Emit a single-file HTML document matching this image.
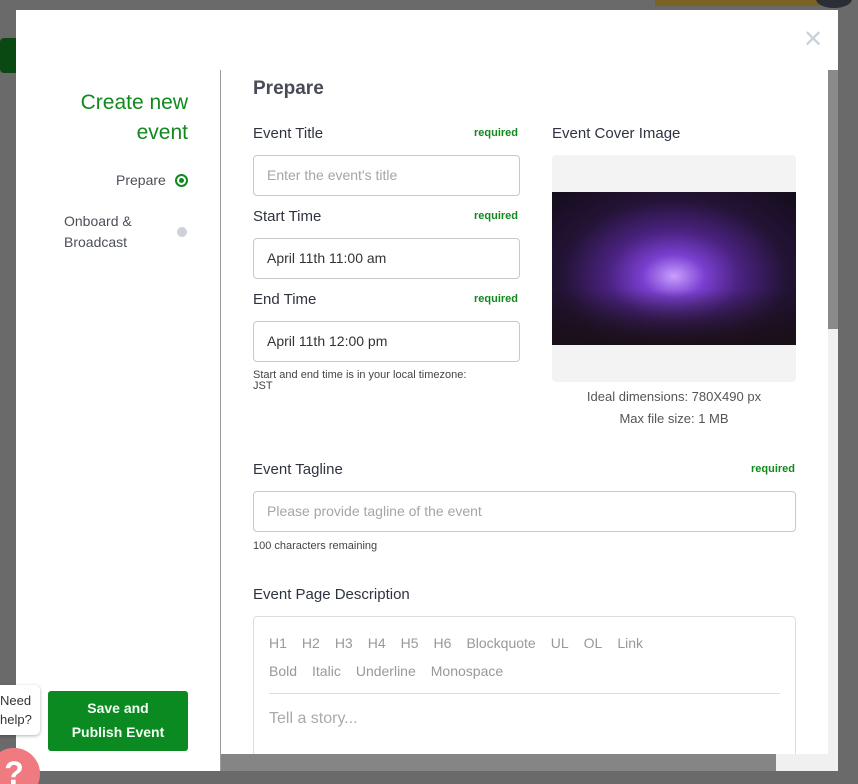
<!DOCTYPE html>
<html><head><style>
*{box-sizing:border-box;margin:0;padding:0}
html,body{width:858px;height:784px;overflow:hidden}
body{background:#6a6a6a;font-family:"Liberation Sans",sans-serif;position:relative}
.a{position:absolute}
.lbl{font-size:15px;color:#2f3340;position:absolute;top:0}
.req{font-size:11px;font-weight:bold;color:#12891f;position:absolute}
.inp{position:absolute;border:1px solid #c9c9c9;border-radius:4px;height:41px;background:#fff;font-size:14px;padding:11px 13px;color:#333}
.ph{color:#a5a5a5}
.tb{color:#999;font-size:14px}
.tb span{margin-right:15px}
</style></head><body>
<div class="a" style="left:655px;top:0;width:170px;height:6px;background:#7a6224"></div>
<div class="a" style="left:816px;top:-10px;width:36px;height:18px;border-radius:50%;background:#2b2e35"></div>
<div class="a" style="left:0;top:38px;width:16px;height:35px;background:#0a4a12;border-radius:4px 0 0 4px"></div>
<div class="a" style="left:16px;top:10px;width:822px;height:761px;background:#fff"></div>
<div class="a" style="left:803px;top:29px;font-size:24px;color:#c8d0d8;line-height:22px">✕</div>
<div class="a" style="left:220px;top:70px;width:1px;height:701px;background:#9a9a9a"></div>
<div class="a" style="left:40px;top:88px;width:148px;text-align:right;color:#12891f;font-size:21px;line-height:30px">Create new event</div>
<div class="a" style="left:116px;top:172px;font-size:14px;color:#4b4f58">Prepare</div>
<div class="a" style="left:175px;top:174px;width:13px;height:13px;border:2px solid #12891f;border-radius:50%"><div style="width:5px;height:5px;margin:2px;background:#12891f;border-radius:50%"></div></div>
<div class="a" style="left:64px;top:211px;font-size:14px;color:#4b4f58;line-height:21px">Onboard &amp;<br>Broadcast</div>
<div class="a" style="left:177px;top:227px;width:10px;height:10px;background:#ced2d8;border-radius:50%"></div>
<div class="a" style="left:48px;top:691px;width:140px;height:60px;background:#0c8a22;border-radius:3px;color:#f2fff2;font-weight:bold;font-size:14px;text-align:center;line-height:24px;padding-top:5px">Save and<br>Publish Event</div>
<div class="a" style="left:-10px;top:685px;width:50px;height:50px;background:#fff;border-radius:5px;font-size:13px;color:#333;line-height:19px;padding:6px 0 0 10px;box-shadow:0 1px 3px rgba(0,0,0,.3)">Need<br>help?</div>
<div class="a" style="left:-12px;top:748px;width:52px;height:52px;border-radius:50%;background:#ef7b80;color:#fff;font-size:32px;font-weight:bold;text-align:center;line-height:50px">?</div>

<div class="a" style="left:253px;top:78px;font-size:19px;font-weight:bold;color:#474b55">Prepare</div>
<div class="lbl" style="left:253px;top:125px">Event Title</div>
<div class="req" style="left:474px;top:127px">required</div>
<div class="inp" style="left:253px;top:155px;width:267px"><span class="ph">Enter the event's title</span></div>
<div class="lbl" style="left:253px;top:208px">Start Time</div>
<div class="req" style="left:474px;top:210px">required</div>
<div class="inp" style="left:253px;top:238px;width:267px">April 11th 11:00 am</div>
<div class="lbl" style="left:253px;top:291px">End Time</div>
<div class="req" style="left:474px;top:293px">required</div>
<div class="inp" style="left:253px;top:321px;width:267px">April 11th 12:00 pm</div>
<div class="a" style="left:253px;top:370px;font-size:11px;color:#444;line-height:11px">Start and end time is in your local timezone:<br>JST</div>

<div class="lbl" style="left:552px;top:125px">Event Cover Image</div>
<div class="a" style="left:552px;top:155px;width:244px;height:227px;background:#f3f3f3;border-radius:4px"></div>
<div class="a" style="left:552px;top:192px;width:244px;height:153px;background:radial-gradient(ellipse at 50% 55%,#c9a0ff 0,#7a3fd0 18%,#4a2280 38%,#231335 65%,#140c1c 100%)"></div>
<div class="a" style="left:552px;top:290px;width:244px;height:55px;background:linear-gradient(rgba(26,16,24,0),#1a1018)"></div>
<div class="a" style="left:552px;top:386px;width:244px;text-align:center;font-size:13px;color:#555;line-height:22px">Ideal dimensions: 780X490 px<br>Max file size: 1 MB</div>

<div class="lbl" style="left:253px;top:461px">Event Tagline</div>
<div class="req" style="left:751px;top:463px">required</div>
<div class="inp" style="left:253px;top:491px;width:543px"><span class="ph">Please provide tagline of the event</span></div>
<div class="a" style="left:253px;top:540px;font-size:11px;color:#444">100 characters remaining</div>

<div class="lbl" style="left:253px;top:586px">Event Page Description</div>
<div class="a" style="left:253px;top:616px;width:543px;height:160px;border:1px solid #ddd;border-radius:4px"></div>
<div class="a tb" style="left:269px;top:635px"><span>H1</span><span>H2</span><span>H3</span><span>H4</span><span>H5</span><span>H6</span><span>Blockquote</span><span>UL</span><span>OL</span><span>Link</span></div>
<div class="a tb" style="left:269px;top:663px"><span>Bold</span><span>Italic</span><span>Underline</span><span>Monospace</span></div>
<div class="a" style="left:269px;top:693px;width:511px;height:1px;background:#ddd"></div>
<div class="a" style="left:269px;top:710px;font-size:16px;color:#aaa">Tell a story...</div>

<div class="a" style="left:828px;top:70px;width:10px;height:701px;background:#f0f0f0"></div>
<div class="a" style="left:828px;top:70px;width:10px;height:259px;background:#8a8a8a"></div>
<div class="a" style="left:221px;top:754px;width:555px;height:17px;background:#858585"></div>
<div class="a" style="left:776px;top:754px;width:52px;height:17px;background:#f0f0f0"></div>
<div class="a" style="left:0;top:771px;width:858px;height:13px;background:#6a6a6a"></div>
<div class="a" style="left:-12px;top:748px;width:52px;height:52px;border-radius:50%;background:#ef7b80;color:#fff;font-size:32px;font-weight:bold;text-align:center;line-height:50px">?</div>
</body></html>
